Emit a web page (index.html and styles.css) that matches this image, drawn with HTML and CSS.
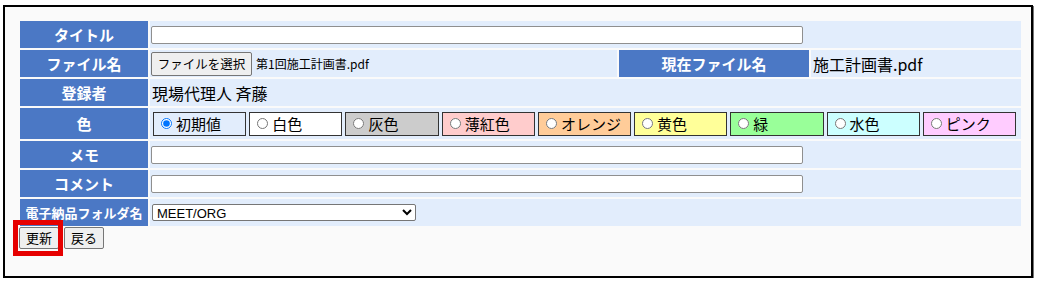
FILE: index.html
```html
<!DOCTYPE html>
<html lang="ja">
<head>
<meta charset="utf-8">
<title>ファイル編集</title>
<link rel="stylesheet" href="styles.css">
</head>
<body>
<div class="frame">
  <table class="form">
    <colgroup>
      <col class="c-label">
      <col class="c-main">
      <col class="c-label2">
      <col class="c-val2">
    </colgroup>
    <tr>
      <th>タイトル</th>
      <td colspan="3"><input class="text" type="text"></td>
    </tr>
    <tr>
      <th>ファイル名</th>
      <td><button type="button" class="btn filebtn">ファイルを選択</button><span class="fname">第1回施工計画書.pdf</span></td>
      <th>現在ファイル名</th>
      <td class="big">施工計画書.pdf</td>
    </tr>
    <tr>
      <th>登録者</th>
      <td colspan="3" class="big">現場代理人 斉藤</td>
    </tr>
    <tr class="color-row">
      <th>色</th>
      <td colspan="3">
        <div class="swatches">
          <label class="sw sw-default"><input type="radio" name="color" checked>初期値</label>
          <label class="sw sw-white"><input type="radio" name="color">白色</label>
          <label class="sw sw-gray"><input type="radio" name="color">灰色</label>
          <label class="sw sw-rose"><input type="radio" name="color">薄紅色</label>
          <label class="sw sw-orange"><input type="radio" name="color">オレンジ</label>
          <label class="sw sw-yellow"><input type="radio" name="color">黄色</label>
          <label class="sw sw-green"><input type="radio" name="color">緑</label>
          <label class="sw sw-aqua"><input type="radio" name="color">水色</label>
          <label class="sw sw-pink"><input type="radio" name="color">ピンク</label>
        </div>
      </td>
    </tr>
    <tr>
      <th>メモ</th>
      <td colspan="3"><input class="text" type="text"></td>
    </tr>
    <tr>
      <th>コメント</th>
      <td colspan="3"><input class="text" type="text"></td>
    </tr>
    <tr>
      <th class="narrow">電子納品フォルダ名</th>
      <td colspan="3">
        <select class="folder">
          <option>MEET/ORG</option>
        </select>
      </td>
    </tr>
  </table>
  <div class="actions">
    <button type="button" class="btn">更新</button>
    <button type="button" class="btn">戻る</button>
  </div>
  <div class="highlight"></div>
</div>
</body>
</html>
```

FILE: styles.css
```css
html, body {
  margin: 0;
  background: #ffffff;
}
body {
  padding: 5px 0 0 3px;
  font-family: "Noto Sans CJK JP", "Noto Sans", sans-serif;
  color: #000;
}
.frame {
  position: relative;
  box-sizing: border-box;
  width: 1030px;
  height: 273px;
  border: 2px solid #000;
  box-shadow: 1px 1px 0 #777;
  background: #fafafa;
  padding: 12px 7px 0 13px;
}
.form {
  width: 1005px;
  table-layout: fixed;
  border-collapse: separate;
  border-spacing: 2px;
}
.c-label { width: 128px; }
.c-main { width: 467px; }
.c-label2 { width: 190px; }
.c-val2 { width: 210px; }
.form tr { height: 27px; }
.form tr.color-row { height: 31px; }
.form th {
  background: #4b78c5;
  color: #fff;
  font-weight: bold;
  font-size: 15px;
  line-height: 18px;
  padding: 0 2px;
  text-align: center;
  white-space: nowrap;
  overflow: hidden;
}
.form th.narrow {
  font-size: 13px;
}
.form td {
  background: #e2edfc;
  padding: 0 0 0 1px;
  font-size: 13px;
  line-height: 18px;
  vertical-align: middle;
  white-space: nowrap;
}
.form td.big {
  font-size: 16px;
  padding-left: 2px;
}
.text {
  box-sizing: border-box;
  display: block;
  width: 652px;
  height: 18px;
  margin: 0;
  padding: 0 3px;
  border: 1px solid #8f8f8f;
  border-radius: 2px;
  background: #fff;
}
.btn {
  box-sizing: border-box;
  height: 22px;
  margin: 0;
  padding: 0 6px;
  font-family: "Noto Sans CJK JP", sans-serif;
  font-size: 13px;
  line-height: 20px;
  color: #000;
  background: #efefef;
  border: 1px solid #767676;
  border-radius: 2px;
}
.filebtn {
  width: 101px;
  height: 24px;
  padding: 0;
  font-size: 12.5px;
  vertical-align: middle;
}
.fname {
  margin-left: 4px;
  font-size: 12px;
  vertical-align: middle;
}
.swatches {
  display: grid;
  grid-template-columns: repeat(9, 1fr);
  column-gap: 3px;
  width: 863px;
  margin-left: 2px;
}
.sw {
  box-sizing: border-box;
  display: flex;
  align-items: center;
  height: 24px;
  border: 1px solid #333;
  font-size: 15px;
  padding-left: 5px;
}
.sw input {
  width: 11px;
  height: 11px;
  margin: 0 4px 0 2px;
  accent-color: #0075ff;
}
.sw-default { background: #e2edfc; }
.sw-white { background: #ffffff; }
.sw-gray { background: #cccccc; }
.sw-rose { background: #ffcccc; }
.sw-orange { background: #ffcc99; }
.sw-yellow { background: #ffff99; }
.sw-green { background: #99ff99; }
.sw-aqua { background: #ccffff; }
.sw-pink { background: #ffccff; }
.folder {
  box-sizing: border-box;
  display: block;
  width: 264px;
  height: 17px;
  margin: 0 0 0 1px;
  padding: 0;
  font-family: "Liberation Sans", Arial, sans-serif;
  font-size: 13px;
  border: 1px solid #767676;
  border-radius: 2px;
  background: #fff;
}
.actions {
  display: flex;
  gap: 5px;
  margin: -1px 0 0 1px;
}
.highlight {
  position: absolute;
  left: 8px;
  top: 213px;
  width: 50px;
  height: 36px;
  box-sizing: border-box;
  border: 5px solid #e60000;
}
```
